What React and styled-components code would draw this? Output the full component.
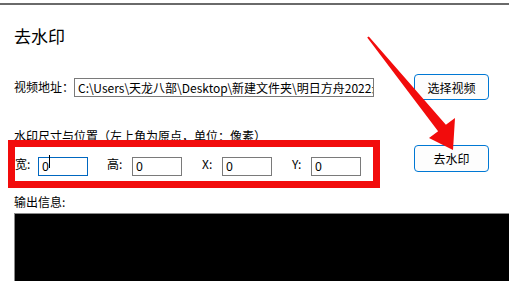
import React from 'react';
import styled, { createGlobalStyle } from 'styled-components';

const GlobalStyle = createGlobalStyle`
  html, body {
    margin: 0;
    padding: 0;
    background: #ffffff;
  }
  body {
    font-family: "Noto Sans CJK SC", "Noto Sans", sans-serif;
    color: #000000;
  }
`;

const Page = styled.div`
  position: relative;
  width: 509px;
  height: 281px;
  overflow: hidden;
  background: #ffffff;
`;

const TopRule = styled.div`
  margin-top: 3px;
  border-top: 2px solid #6a6a6a;
`;

const Content = styled.div`
  width: 475px;
  padding-left: 14px;
  display: flex;
  flex-direction: column;
`;

const Title = styled.div`
  margin-top: 19px;
  height: 24px;
  line-height: 24px;
  font-size: 17px;
`;

const Row = styled.div`
  display: flex;
  justify-content: space-between;
  align-items: ${props => props.align || 'center'};
  margin-top: ${props => props.top}px;
`;

const Group = styled.div`
  display: flex;
  align-items: center;
  margin-top: ${props => props.offset || 0}px;
`;

const Label = styled.span`
  font-size: 12px;
  line-height: 18px;
  white-space: nowrap;
  width: ${props => (props.w ? `${props.w}px` : 'auto')};
  flex-shrink: 0;
`;

const Section = styled.div`
  margin-top: ${props => props.top}px;
  height: 18px;
  font-size: 12px;
  line-height: 18px;
  white-space: nowrap;
`;

const Field = styled.div`
  display: flex;
  align-items: center;
  margin-right: ${props => props.gap || 0}px;
`;

const InputWrap = styled.div`
  position: relative;
`;

const Input = styled.input`
  box-sizing: border-box;
  width: ${props => props.w}px;
  height: 19px;
  border: 1px solid ${props => (props.focused ? '#0067c0' : '#7a7a7a')};
  padding: 0 0 0 3px;
  margin: 0;
  font-family: ${props => (props.cjk ? '"Noto Sans CJK SC", sans-serif' : '"Noto Sans", "Noto Sans CJK SC", sans-serif')};
  font-size: 12px;
  color: #000000;
  background: #ffffff;
  outline: none;
`;

const Caret = styled.span`
  position: absolute;
  left: 11px;
  top: 3px;
  width: 1px;
  height: 13px;
  background: #000000;
`;

const Button = styled.button`
  box-sizing: border-box;
  width: 75px;
  height: ${props => props.h}px;
  border: 1px solid #0078d4;
  border-radius: 4px;
  background: #fdfdfd;
  font-family: "Noto Sans CJK SC", sans-serif;
  font-size: 12px;
  color: #000000;
  padding: 0;
`;

const Output = styled.div`
  margin-top: 2px;
  height: 80px;
  width: 495px;
  background: #000000;
  border-top: 1px solid #8a8a8a;
  border-left: 1px solid #8a8a8a;
`;

const Highlight = styled.div`
  position: absolute;
  left: 8px;
  top: 140px;
  width: 372px;
  height: 48px;
  box-sizing: border-box;
  border: 7px solid #f20c0c;
  pointer-events: none;
`;

const ArrowLayer = styled.svg`
  position: absolute;
  left: 0;
  top: 0;
  pointer-events: none;
`;

const fields = [
  { label: '宽:', w: 23, gap: 19, focused: true },
  { label: '高:', w: 25, gap: 20 },
  { label: 'X:', w: 20, gap: 20 },
  { label: 'Y:', w: 19, gap: 0 },
];

export default function App() {
  return (
    <Page>
      <GlobalStyle />
      <TopRule />
      <Content>
        <Title>去水印</Title>
        <Row top={26}>
          <Group>
            <Label w={60}>视频地址：</Label>
            <Input
              w={300}
              cjk
              readOnly
              value="C:\Users\天龙八部\Desktop\新建文件夹\明日方舟2022最新视频.mp4"
            />
          </Group>
          <Button h={26}>选择视频</Button>
        </Row>
        <Section top={27}>水印尺寸与位置（左上角为原点，单位：像素）</Section>
        <Row top={0} align="flex-start">
          <Group offset={7}>
            {fields.map(f => (
              <Field key={f.label} gap={f.gap}>
                <Label w={f.w} style={{ paddingLeft: f.focused ? 1 : 0 }}>{f.label}</Label>
                <InputWrap>
                  <Input w={50} readOnly value="0" focused={f.focused} />
                  {f.focused && <Caret />}
                </InputWrap>
              </Field>
            ))}
          </Group>
          <Button h={27}>去水印</Button>
        </Row>
        <Section top={17}>输出信息:</Section>
        <Output />
      </Content>
      <Highlight />
      <ArrowLayer width="509" height="281" viewBox="0 0 509 281">
        <polygon
          points="368.8,36.4 445.9,124.8 455,118 453,150 429,138 438.1,131.2 367.2,37.6"
          fill="#f20c0c"
        />
      </ArrowLayer>
    </Page>
  );
}
